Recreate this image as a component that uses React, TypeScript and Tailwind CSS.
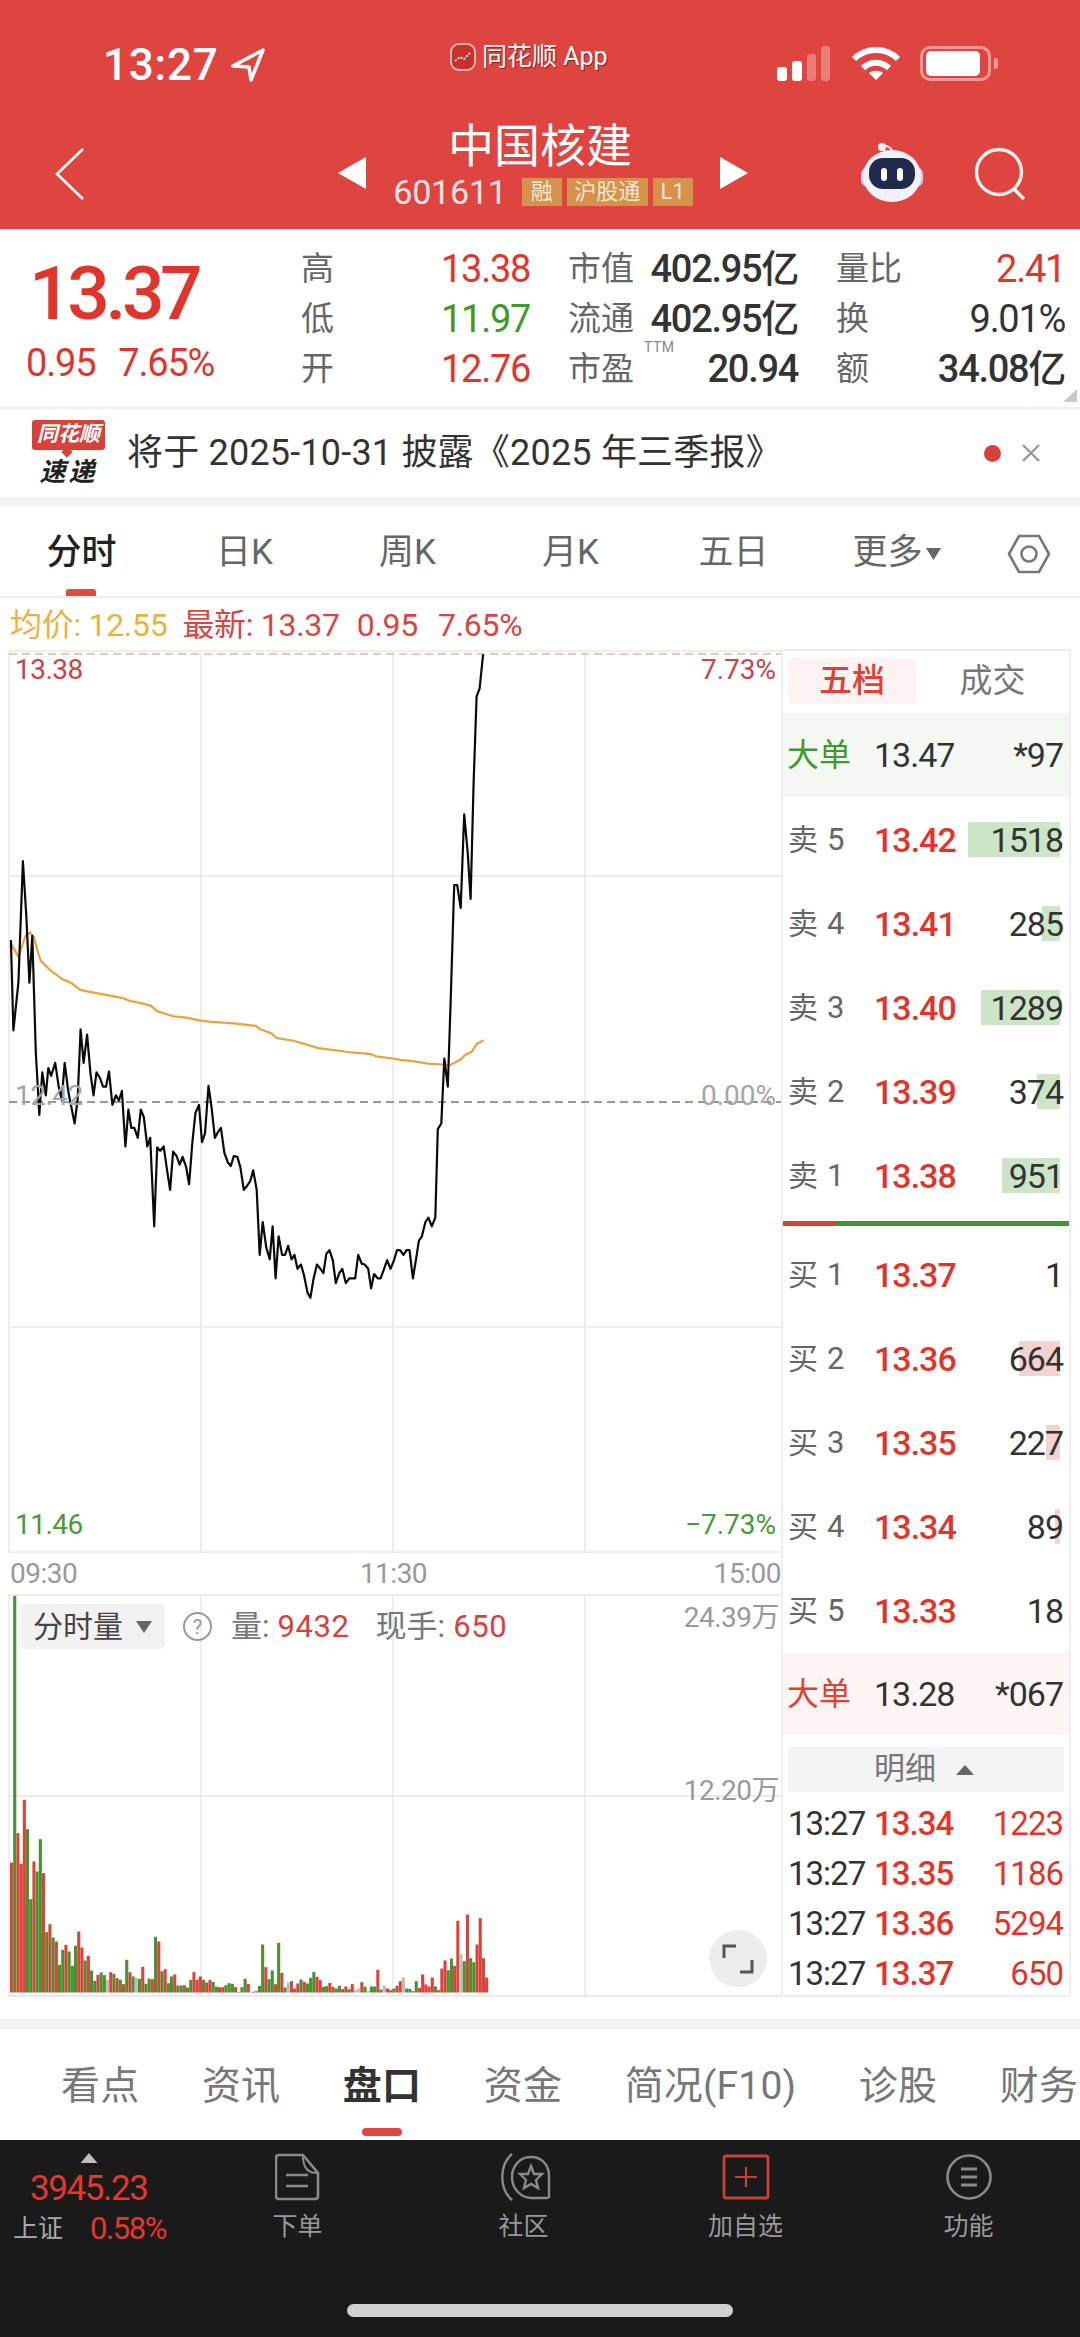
import React from "react";

const blackRaw = "22,692 27,900 37,790 46,510 53,640 59,790 65,682 72,950 79,1095 85,997 92,1050 97,987 103,1005 111,975 118,1030 124,1060 130,975 137,1040 150,1115 156,1060 162,898 168,975 175,910 182,1000 188,1050 194,997 201,1010 207,1030 213,1030 219,995 226,1072 233,1050 239,1062 245,1040 252,1168 258,1083 264,1125 270,1125 277,1148 283,1083 289,1100 296,1168 302,1148 310,1352 316,1170 322,1178 329,1168 336,1225 342,1268 348,1180 355,1190 361,1210 367,1192 374,1215 380,1255 387,1155 393,1090 400,1072 406,1158 412,1138 419,1028 425,1075 432,1148 438,1135 444,1125 451,1183 458,1205 464,1213 470,1190 477,1192 483,1215 490,1268 497,1258 503,1248 509,1223 516,1268 522,1418 528,1342 535,1400 542,1428 548,1352 554,1472 560,1375 567,1418 573,1418 579,1397 586,1428 592,1418 598,1450 605,1440 611,1465 618,1505 624,1517 630,1475 637,1440 644,1450 650,1460 656,1415 662,1407 669,1430 675,1483 682,1460 688,1450 695,1483 702,1472 708,1472 714,1472 720,1418 727,1438 733,1440 740,1450 746,1495 752,1462 759,1472 765,1472 772,1450 778,1430 785,1450 792,1430 798,1407 804,1407 811,1418 817,1407 823,1407 830,1472 836,1430 842,1385 848,1375 855,1342 861,1332 868,1352 875,1332 880,1128 887,1115 893,965 900,1030 906,830 913,565 919,565 926,618 933,402 940,490 946,597 952,330 958,130 964,112 971,33";
const orangeRaw = "22,700 37,730 52,680 60,675 68,685 75,715 82,740 95,755 108,768 125,782 145,792 160,806 175,810 210,818 245,825 260,832 285,838 303,843 316,856 335,863 350,868 375,871 400,877 420,880 470,884 515,890 522,897 545,907 557,918 590,924 625,936 640,941 700,950 745,955 755,960 790,965 805,968 830,971 860,977 905,980 925,968 935,957 948,950 958,932 972,923";
const toPts = (s: string) =>
  s.split(" ").map((p) => {
    const [x, y] = p.split(",").map(Number);
    return `${(x / 2.01).toFixed(1)},${(y / 2.306 - 9).toFixed(1)}`;
  }).join(" ");

const bars1 = "r248 g-552 r160 r252 r60 g148 g358 r245 g275 g178 r280 g457 r433 g473 r485 g555 g510 r495 g515 g558 g498 r455 r503 g542 r528 g572 g603 r585 g578 g586 s600 r577 g582 r595 g600 r613 g540 r577 g590 s594 g597 r561 g612 g596 r598 g471 r485 g574 r568 g610 g590 r584 g617 g617 r616 g623 g600 r577 r600 r590 g600 r608 r600 g606 g620 r622 r622 g616 g610 g612 r622 g636 g622 g597 r612".split(" ");
const bars2 = "r335 r333 g317 g193 r261 g297 g271 r312 g188 r278 g322 s308 r303 r325 r310 g298 r305 g310 g293 g275 r290 r300 g320 g318 r308 r320 g325 g317 r327 r319 g327 r312 s330 s325 r306 g319 s332 g319 g319 r269 g328 s316 r325 r330 g325 r317 r303 s292 g325 g326 r333 g303 r323 r283 r313 r319 r292 g319 r330 r265 r241 g270 g235 r257 r122 s222 g243 r103 g234 g246 r193 r114 r234 r292".split(" ");
const COL: Record<string, string> = { r: "#D9443B", g: "#4A9130", s: "#BDBDBD" };
const volBars = [
  ...bars1.map((b, i) => ({ c: COL[b[0]], x: 10 + i * 3.2, h: (638 - Number(b.slice(1))) / 3 })),
  ...bars2.map((b, i) => ({ c: COL[b[0]], x: 248.3 + (i + 1) * 3.2, h: (337 - Number(b.slice(1))) / 3 })),
];

function PriceChart() {
  return (
    <div className="relative h-[904px] w-full">
      <svg width="781" height="904" className="block">
        {[9, 201, 393, 585].map((x) => (
          <line key={x} x1={x} x2={x} y1="2" y2="904" stroke="#E8E8E8" strokeWidth="1.5" />
        ))}
        <line x1="9" x2="781" y1="2" y2="2" stroke="#EAEAEA" strokeWidth="1.5" />
        <line x1="9" x2="781" y1="5" y2="5" stroke="#DDBF94" strokeWidth="1.5" strokeDasharray="8 5" />
        <line x1="9" x2="781" y1="227" y2="227" stroke="#E8E8E8" strokeWidth="1.5" />
        <line x1="9" x2="781" y1="453" y2="453" stroke="#777" strokeWidth="1.5" strokeDasharray="8 5" />
        <line x1="9" x2="781" y1="678" y2="678" stroke="#E8E8E8" strokeWidth="1.5" />
        <line x1="9" x2="781" y1="903" y2="903" stroke="#E8E8E8" strokeWidth="1.5" />
        <polyline points={toPts(orangeRaw)} fill="none" stroke="#EBA23C" strokeWidth="2.2" />
        <polyline points={toPts(blackRaw)} fill="none" stroke="#0A0A0A" strokeWidth="2.2" strokeLinejoin="round" />
      </svg>
      <span className="absolute left-[15px] top-[6px] text-[28px] leading-[30px] tracking-[-0.5px] text-[#CC4247]">13.38</span>
      <span className="absolute right-[5px] top-[6px] text-[28px] leading-[30px] tracking-[0px] text-[#CC4247]">7.73%</span>
      <span className="absolute left-[15px] top-[432px] text-[28px] leading-[30px] tracking-[-0.5px] text-[#A5A5A5]">12.42</span>
      <span className="absolute right-[5px] top-[432px] text-[28px] leading-[30px] tracking-[0px] text-[#A5A5A5]">0.00%</span>
      <span className="absolute left-[15px] top-[861px] text-[28px] leading-[30px] tracking-[-0.5px] text-[#4A9A35]">11.46</span>
      <span className="absolute right-[5px] top-[861px] text-[28px] leading-[30px] tracking-[0px] text-[#4A9A35]">−7.73%</span>
    </div>
  );
}

function VolumeChart() {
  return (
    <div className="relative h-[403px] w-full">
      <svg width="781" height="403" className="block">
        {[9, 201, 393, 585].map((x) => (
          <line key={x} x1={x} x2={x} y1="0" y2="403" stroke="#E8E8E8" strokeWidth="1.5" />
        ))}
        <line x1="9" x2="781" y1="1" y2="1" stroke="#E4E4E4" strokeWidth="1.5" />
        <line x1="9" x2="781" y1="202" y2="202" stroke="#E4E4E4" strokeWidth="1.5" />
        <line x1="9" x2="781" y1="402" y2="402" stroke="#E4E4E4" strokeWidth="1.5" />
        {volBars.map((b, i) => (
          <rect key={i} x={b.x} width="3.1" y={398.5 - b.h} height={b.h} fill={b.c} />
        ))}
      </svg>
      <div className="absolute left-[20px] top-[10px] flex h-[45px] w-[145px] items-center rounded-[5px] bg-[#F2F2F2] pl-[13px] text-[30px] text-[#444]">
        分时量
        <svg width="16" height="12" className="ml-[13px]"><path d="M0 0H16L8 12Z" fill="#666" /></svg>
      </div>
      <div className="absolute left-[183px] top-[18px] flex h-[29px] w-[29px] items-center justify-center rounded-full border-2 border-[#999] text-[20px] leading-none text-[#999]">?</div>
      <div className="absolute left-[231px] top-[13px] flex h-[40px] items-center text-[31px] text-[#777]">
        量:<span className="ml-[8px] tracking-[0.6px] text-[#D8413F]">9432</span>
        <span className="ml-[26px]">现手:</span><span className="ml-[8px] tracking-[0.6px] text-[#D8413F]">650</span>
      </div>
      <span className="absolute right-[2px] top-[9px] text-[28px] leading-[30px] tracking-[-0.5px] text-[#999]">24.39万</span>
      <span className="absolute right-[2px] top-[182px] text-[28px] leading-[30px] tracking-[-0.5px] text-[#999]">12.20万</span>
      <div className="absolute left-[709px] top-[336px] flex h-[57px] w-[58px] items-center justify-center rounded-full bg-[#EDEDED]">
        <svg width="32" height="30" fill="none" stroke="#555" strokeWidth="3">
          <path d="M2 14V2H14" />
          <path d="M30 16V28H18" />
        </svg>
      </div>
    </div>
  );
}

function BookRow({ label, n, price, vol, bar, color }: { label: string; n: number; price: string; vol: string; bar: number; color: string }) {
  return (
    <div className="relative flex h-[84px] items-center pl-[5px] pr-[6px]">
      <span className="w-[86px] text-[30px] text-[#666]">
        {label}
        <span className="ml-[9px] text-[31px] text-[#666]">{n}</span>
      </span>
      <span className="text-[34px] font-medium tracking-[-1px] text-[#E0352B]">{price}</span>
      {bar > 0 && <div className="absolute right-[9px] top-[24px] h-[35px]" style={{ width: bar, backgroundColor: color }} />}
      <span className="relative ml-auto text-[34px] tracking-[-1px] text-[#333]">{vol}</span>
    </div>
  );
}

function OrderBook() {
  const sells = [
    [5, "13.42", "1518", 92], [4, "13.41", "285", 18], [3, "13.40", "1289", 79], [2, "13.39", "374", 23], [1, "13.38", "951", 58],
  ] as const;
  const buys = [
    [1, "13.37", "1", 0], [2, "13.36", "664", 41], [3, "13.35", "227", 14], [4, "13.34", "89", 5], [5, "13.33", "18", 0],
  ] as const;
  const details = [["13.34", "1223"], ["13.35", "1186"], ["13.36", "5294"], ["13.37", "650"]];
  return (
    <div className="flex w-[290px] flex-col border-x-2 border-y-2 border-[#EEEEEE]">
      <div className="flex h-[62px] shrink-0 items-start pl-[5px] pt-[7px]">
        <div className="flex h-[46px] w-[130px] items-center justify-center rounded-[4px] bg-[#FDF3F2] text-[33px] font-medium text-[#DD4238]">五档</div>
        <div className="flex h-[46px] w-[155px] items-center justify-center text-[33px] text-[#777]">成交</div>
      </div>
      <div className="flex h-[84px] shrink-0 items-center bg-[#F3F8F3] pl-[4px] pr-[6px]">
        <span className="w-[87px] text-[32px] text-[#3F9A2E]">大单</span>
        <span className="text-[34px] tracking-[-1px] text-[#333]">13.47</span>
        <span className="ml-auto text-[34px] tracking-[-1px] text-[#333]">*97</span>
      </div>
      <div className="h-[1px] shrink-0" />
      {sells.map(([n, p, v, b]) => (
        <BookRow key={n} label="卖" n={n} price={p} vol={v} bar={b} color="#CBE5C6" />
      ))}
      <div className="flex h-[15px] shrink-0 items-start pt-[3px]">
        <div className="h-[5px] w-[53px] bg-[#D0453F]" />
        <div className="h-[5px] flex-1 bg-[#3F9630]" />
      </div>
      {buys.map(([n, p, v, b]) => (
        <BookRow key={n} label="买" n={n} price={p} vol={v} bar={b} color="#F2D3D2" />
      ))}
      <div className="flex h-[82px] shrink-0 items-center bg-[#FCF5F4] pl-[4px] pr-[6px]">
        <span className="w-[87px] text-[32px] text-[#DD4238]">大单</span>
        <span className="text-[34px] tracking-[-1px] text-[#333]">13.28</span>
        <span className="ml-auto text-[34px] tracking-[-1px] text-[#333]">*067</span>
      </div>
      <div className="mx-[5px] mt-[12px] flex h-[45px] shrink-0 items-center justify-center bg-[#F4F4F4] pr-[4px] text-[31px] text-[#777]">
        明细
        <svg width="18" height="10" className="ml-[20px]"><path d="M9 0L18 10H0Z" fill="#666" /></svg>
      </div>
      <div className="flex min-h-0 flex-1 flex-col pt-[7px]">
        {details.map(([p, v]) => (
          <div key={p} className="flex h-[50px] shrink-0 items-center pl-[5px] pr-[6px] text-[33px] tracking-[-1px]">
            <span className="w-[86px] text-[#333]">13:27</span>
            <span className="font-medium text-[#E0352B]">{p}</span>
            <span className="ml-auto text-[#E0352B]">{v}</span>
          </div>
        ))}
      </div>
    </div>
  );
}

function StatusBar() {
  return (
    <div className="flex h-[120px] items-start">
      <div className="flex w-[450px] items-center pl-[103px] pt-[42px]">
        <span className="text-[44px] font-medium leading-[46px] tracking-[0.8px] text-white">13:27</span>
        <svg width="36" height="36" viewBox="0 0 36 36" fill="none" stroke="white" strokeWidth="3.5" strokeLinejoin="round" className="ml-[11px]">
          <path d="M33 3L3 19L19 20L21 33Z" />
        </svg>
      </div>
      <div className="flex w-[327px] items-center pt-[39px]">
        <div className="flex h-[28px] w-[26px] items-center justify-center rounded-[9px] border-2 border-[#F0B4B0] bg-[#C8322C]">
          <svg width="18" height="14" fill="none" stroke="white" strokeWidth="1.6" strokeDasharray="2 1.5"><path d="M1 11L6 7L10 9L17 2" /></svg>
        </div>
        <span className="ml-[6px] text-[25px] leading-[36px] text-white [text-shadow:1px_1px_1px_rgba(90,20,20,0.7)]">同花顺 App</span>
      </div>
      <div className="flex items-end pt-[46px]">
        <div className="flex h-[35px] items-end gap-[5px]">
          <div className="h-[14px] w-[10px] rounded-[3px] bg-white" />
          <div className="h-[20px] w-[10px] rounded-[3px] bg-white" />
          <div className="h-[27px] w-[9px] rounded-[3px] bg-[#EC7C78]" />
          <div className="h-[35px] w-[9px] rounded-[3px] bg-[#EC7C78]" />
        </div>
        <svg width="50" height="35" viewBox="0 0 50 35" fill="none" stroke="white" strokeWidth="6" className="ml-[21px]">
          <path d="M3 13C15 1 35 1 47 13" />
          <path d="M12 22C20 15 30 15 38 22" />
          <path d="M25 34L18 27C22 24 28 24 32 27Z" fill="white" stroke="none" />
        </svg>
        <div className="ml-[19px] flex h-[35px] w-[71px] items-center rounded-[10px] border-[3px] border-[#F09A96] px-[3px]">
          <div className="h-[25px] w-[54px] rounded-[5px] bg-white" />
        </div>
        <div className="mb-[12px] ml-[3px] h-[11px] w-[4px] rounded-r-[3px] bg-[#F09A96]" />
      </div>
    </div>
  );
}

function NavBar() {
  return (
    <div className="flex h-[109px] items-start">
      <div className="w-[338px] pl-[55px] pt-[28px]">
        <svg width="30" height="52" fill="none" stroke="white" strokeWidth="2.6"><path d="M28 1L2 26L28 51" /></svg>
      </div>
      <svg width="28" height="32" className="mt-[37px] shrink-0"><path d="M28 0V32L0 16Z" fill="white" /></svg>
      <div className="flex w-[354px] flex-col items-center">
        <span className="mr-[6px] mt-[-2px] text-[46px] leading-[56px] text-white">中国核建</span>
        <div className="mt-[4px] flex h-[28px] items-center gap-[5px] text-[25px] leading-[28px] text-[#F6E5D2]">
          <span className="mr-[10px] text-[34px] tracking-[-0.2px] text-[#FBE6E4]">601611</span>
          <span className="flex h-[28px] w-[40px] items-center justify-center bg-[#D4924C] text-[22px]">融</span>
          <span className="flex h-[28px] w-[81px] items-center justify-center bg-[#D4924C] text-[22px]">沪股通</span>
          <span className="flex h-[28px] w-[40px] items-center justify-center bg-[#D4924C] text-[22px]">L1</span>
        </div>
      </div>
      <svg width="28" height="32" className="mt-[37px] shrink-0"><path d="M0 0V32L28 16Z" fill="white" /></svg>
      <svg width="64" height="60" viewBox="0 0 64 60" className="ml-[112px] mt-[23px] shrink-0">
        <path d="M26 10C24 6 20 4 22 3C26 2 30 4 33 8" fill="none" stroke="#E9E6F5" strokeWidth="2" />
        <circle cx="22" cy="4" r="4" fill="#F3F0FA" />
        <rect x="1" y="24" width="62" height="20" rx="7" fill="#CFC9EF" />
        <ellipse cx="32" cy="33" rx="29" ry="26" fill="#F2F0FB" />
        <rect x="9" y="15" width="46" height="31" rx="14" fill="#1F2A4D" />
        <rect x="21" y="25" width="6" height="13" rx="3" fill="white" />
        <rect x="37" y="25" width="6" height="13" rx="3" fill="white" />
      </svg>
      <svg width="54" height="54" viewBox="0 0 54 54" fill="none" stroke="#FFF3F2" strokeWidth="3.4" className="ml-[50px] mt-[27px] shrink-0">
        <circle cx="25" cy="25" r="22.5" />
        <path d="M40 42L50 52" />
      </svg>
    </div>
  );
}

function Stat({ label, value, cls = "text-[#333]", extra }: { label: string; value: string; cls?: string; extra?: React.ReactNode }) {
  return (
    <div className="relative flex items-center justify-between">
      <span className="text-[33px] leading-[40px] text-[#666]">{label}</span>
      {extra}
      <span className={`text-[38px] leading-[44px] tracking-[-1.3px] ${cls}`}>{value}</span>
    </div>
  );
}

function Quote() {
  return (
    <div className="relative flex h-[178px] bg-white">
      <div className="w-[301px] shrink-0 pl-[26px]">
        <div className="ml-[3px] mt-[33px] text-[75px] font-medium leading-[62px] tracking-[-4.4px] text-[#E0352B]">13.37</div>
        <div className="mt-[21px] flex items-center text-[38px] leading-[36px] tracking-[-1.2px] text-[#E0352B]">
          <span>0.95</span>
          <span className="ml-[23px]">7.65%</span>
        </div>
      </div>
      <div className="grid h-[150px] flex-1 grid-cols-[229px_230px_229px] gap-x-[38px] pt-[15px] [grid-auto-rows:50px]">
        <Stat label="高" value="13.38" cls="text-[#E0352B]" />
        <Stat label="市值" value="402.95亿" cls="text-[#333] font-medium" />
        <Stat label="量比" value="2.41" cls="text-[#E0352B]" />
        <Stat label="低" value="11.97" cls="text-[#3F9A2E]" />
        <Stat label="流通" value="402.95亿" cls="text-[#333] font-medium" />
        <Stat label="换" value="9.01%" />
        <Stat label="开" value="12.76" cls="text-[#E0352B]" />
        <Stat
          label="市盈"
          value="20.94"
          cls="text-[#333] font-medium"
          extra={<span className="absolute left-[76px] top-[-5px] text-[14px] leading-[16px] tracking-[0.5px] text-[#888]">TTM</span>}
        />
        <Stat label="额" value="34.08亿" cls="text-[#333] font-medium" />
      </div>
      <svg width="14" height="13" className="absolute bottom-[5px] right-[3px]"><path d="M14 0V13H0Z" fill="#C9C9C9" /></svg>
    </div>
  );
}

function Notice() {
  return (
    <div className="flex h-[90px] items-center border-t-2 border-[#EEEEEE] bg-white pl-[32px]">
      <div className="flex w-[73px] shrink-0 flex-col items-center">
        <div className="relative flex h-[30px] w-[73px] items-center justify-center rounded-[3px] bg-[#D9423B] text-[21px] font-bold italic leading-none text-white">
          同花顺
          <div className="absolute left-[31px] top-[28px] h-[8px] w-[8px] rotate-45 bg-[#D9423B]" />
        </div>
        <div className="mt-[7px] text-[26px] font-bold italic leading-[30px] tracking-[3px] text-[#222]">速递</div>
      </div>
      <span className="ml-[22px] text-[36px] leading-[44px] tracking-[0.2px] text-[#333]">将于 2025-10-31 披露《2025 年三季报》</span>
      <div className="ml-auto mr-[39px] flex items-center">
        <div className="h-[17px] w-[17px] rounded-full bg-[#D9423B]" />
        <svg width="20" height="20" fill="none" stroke="#999" strokeWidth="2.4" className="ml-[20px]"><path d="M2 2L18 18M18 2L2 18" /></svg>
      </div>
    </div>
  );
}

function ChartTabs() {
  const tabs = ["分时", "日K", "周K", "月K", "五日"];
  return (
    <div className="flex h-[91px] border-b-2 border-[#EEEEEE] bg-white pt-[4px]">
      {tabs.map((t, i) => (
        <div key={t} className={`relative flex w-[163px] items-center justify-center text-[35px] ${i === 0 ? "font-medium text-[#222]" : "text-[#666]"}`}>
          {t}
          {i === 0 && <div className="absolute bottom-0 left-[66px] h-[7px] w-[30px] rounded-t-[3px] bg-[#DF4A42]" />}
        </div>
      ))}
      <div className="flex w-[163px] items-center justify-center text-[35px] text-[#666]">
        更多
        <svg width="15" height="12" className="ml-[3px]"><path d="M0 0H15L7.5 12Z" fill="#666" /></svg>
      </div>
      <div className="flex flex-1 items-center justify-center">
        <svg width="44" height="40" viewBox="0 0 44 40" fill="none" stroke="#777" strokeWidth="2.6">
          <path d="M2 20L12 2H32L42 20L32 38H12Z" />
          <circle cx="22" cy="20" r="7.5" />
        </svg>
      </div>
    </div>
  );
}

function BottomTabs() {
  const tabs = ["看点", "资讯", "盘口", "资金", "简况(F10)", "诊股", "财务"];
  return (
    <div className="flex h-[111px] gap-[62.5px] overflow-hidden bg-white pl-[61px] pt-[3px]">
      {tabs.map((t, i) => (
        <div key={t} className={`relative flex shrink-0 items-center text-[39px] leading-none tracking-[0.2px] ${i === 2 ? "font-bold text-[#333]" : "text-[#777]"}`}>
          {t}
          {i === 2 && <div className="absolute bottom-[4px] left-[19px] h-[8px] w-[40px] rounded-full bg-[#E2453D]" />}
        </div>
      ))}
    </div>
  );
}

function Footer() {
  const Label = ({ children, cls = "text-[#999]" }: { children: string; cls?: string }) => (
    <span className={`mt-[8px] text-[25px] leading-[36px] ${cls}`}>{children}</span>
  );
  return (
    <div className="flex h-[197px] flex-col bg-[#1A1A1A]">
      <div className="flex h-[107px] pt-[13px]">
        <div className="flex w-[186px] shrink-0 flex-col pl-[13px]">
          <svg width="22" height="13" className="ml-[65px]"><path d="M11 0L22 13H0Z" fill="#BDBDBD" /></svg>
          <span className="ml-[17px] mt-[7px] text-[35px] leading-[38px] tracking-[-1.4px] text-[#E5372B]">3945.23</span>
          <div className="mt-[3px] flex items-center">
            <span className="w-[77px] text-[25px] leading-[36px] text-[#AAA]">上证</span>
            <span className="text-[31px] leading-[36px] tracking-[-1.4px] text-[#E5372B]">0.58%</span>
          </div>
        </div>
        <div className="flex w-[223px] flex-col items-center">
          <svg width="45" height="48" viewBox="0 0 45 48" fill="none" stroke="#8A8A8A" strokeWidth="2.6">
            <path d="M4 2H28L43 20V43C43 45 42 46 40 46H4C2 46 1 45 1 43V5C1 3 2 2 4 2Z" />
            <path d="M28 3C28 15 33 20 42 20" strokeWidth="2" />
            <path d="M11 22H33M11 33H33" />
          </svg>
          <Label>下单</Label>
        </div>
        <div className="ml-[3px] flex w-[223px] flex-col items-center">
          <svg width="54" height="48" viewBox="0 0 54 48" fill="none" stroke="#8A8A8A" strokeWidth="2.4">
            <path d="M15 1C2 12 2 36 15 47" />
            <path d="M52 44V23C52 11 44 4 34 4C23 4 15 13 15 24C15 36 24 45 35 45H50Z" />
            <path d="M34 13L37 21L45 21L39 27L41 35L34 31L27 35L29 27L23 21L31 21Z" />
          </svg>
          <Label>社区</Label>
        </div>
        <div className="ml-[-1px] flex w-[223px] flex-col items-center">
          <svg width="48" height="48" viewBox="0 0 48 48" fill="none" stroke="#C8403C" strokeWidth="2.8">
            <rect x="2" y="3" width="44" height="42" rx="2" />
            <path d="M24 14V34M13 24H35" strokeWidth="2.2" />
          </svg>
          <Label>加自选</Label>
        </div>
        <div className="flex w-[223px] flex-col items-center">
          <svg width="46" height="48" viewBox="0 0 46 48" fill="none" stroke="#8A8A8A" strokeWidth="2.6">
            <circle cx="23" cy="24" r="21.5" />
            <path d="M15 16H31M15 24H31M15 32H31" strokeWidth="3" />
          </svg>
          <Label>功能</Label>
        </div>
      </div>
      <div className="ml-[347px] mt-[57px] h-[13px] w-[386px] rounded-full bg-[#D0D0D0]" />
    </div>
  );
}

export default function App() {
  return (
    <div className="flex h-[2337px] w-[1080px] flex-col overflow-hidden bg-white font-['Roboto','Noto_Sans_CJK_SC',sans-serif]">
      <div className="h-[229px] shrink-0 bg-[#DE4540]">
        <StatusBar />
        <NavBar />
      </div>
      <Quote />
      <Notice />
      <div className="h-[10px] shrink-0 bg-[#F4F4F4]" />
      <ChartTabs />
      <div className="flex h-[51px] shrink-0 items-center pl-[10px] pt-[3px] text-[32px] tracking-[-0.3px]">
        <span className="text-[#E8B33F]">均价: 12.55</span>
        <span className="ml-[15px] text-[#D9453F]">最新: 13.37</span>
        <span className="ml-[17px] text-[#D9453F]">0.95</span>
        <span className="ml-[20px] text-[#D9453F]">7.65%</span>
      </div>
      <div className="flex h-[1348px] shrink-0">
        <div className="flex w-[781px] shrink-0 flex-col">
          <PriceChart />
          <div className="relative flex h-[41px] items-center justify-between pl-[10px] text-[28px] tracking-[-0.5px] text-[#999]">
            <span>09:30</span>
            <span className="ml-[-4px]">11:30</span>
            <span>15:00</span>
          </div>
          <VolumeChart />
        </div>
        <OrderBook />
      </div>
      <div className="h-[22px] shrink-0" />
      <div className="h-[10px] shrink-0 bg-[#F4F4F4]" />
      <BottomTabs />
      <Footer />
    </div>
  );
}
